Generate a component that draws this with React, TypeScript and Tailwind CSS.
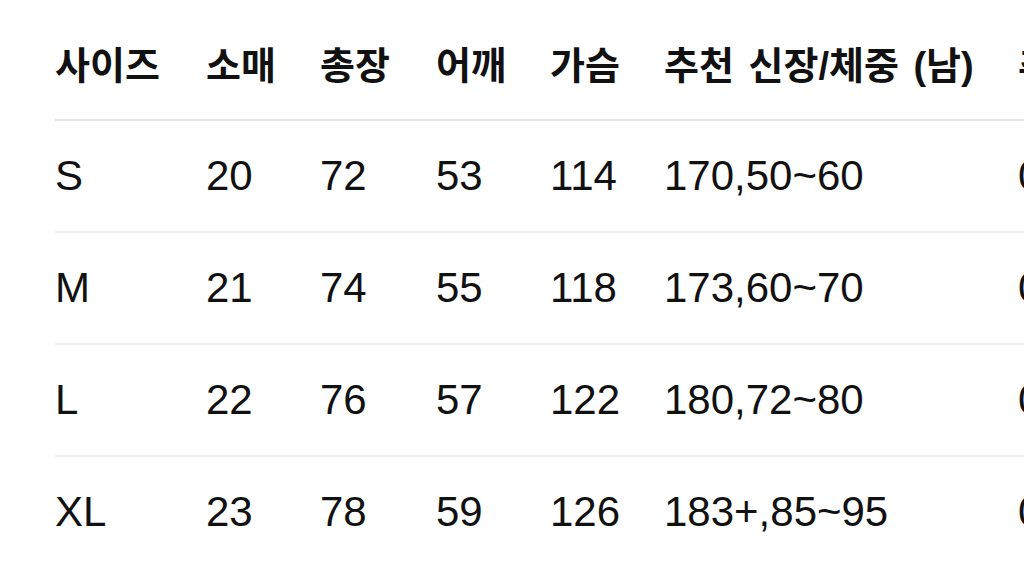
import React from "react";

const headers = ["사이즈", "소매", "총장", "어깨", "가슴", "추천 신장/체중 (남)", "추천 신장/체중 (여)"];
const rows = [
  ["S", "20", "72", "53", "114", "170,50~60", "0"],
  ["M", "21", "74", "55", "118", "173,60~70", "0"],
  ["L", "22", "76", "57", "122", "180,72~80", "0"],
  ["XL", "23", "78", "59", "126", "183+,85~95", "0"],
];

const cols = "grid grid-cols-[151px_114px_116px_114px_114px_354px_360px]";

export default function App() {
  return (
    <div
      className="w-[1024px] h-[563px] overflow-hidden bg-white pl-[55px] pt-[9px]"
      style={{ fontFamily: '"Liberation Sans", "Noto Sans CJK KR", sans-serif' }}
    >
      <div className="w-[1300px]">
        <div className={`${cols} h-[112px] items-center border-b-2 border-[#e4e4e4] text-[38px] font-bold text-[#111111] [word-spacing:4px]`}>
          {headers.map((h, i) => (
            <div key={i} className="whitespace-nowrap leading-none pt-[3px]">
              {h}
            </div>
          ))}
        </div>
        {rows.map((r, ri) => (
          <div key={ri} className={`${cols} h-[112px] items-center border-b-2 border-[#efefef] text-[42px] text-[#111111]`}>
            {r.map((c, i) => (
              <div key={i} className="whitespace-nowrap leading-none">
                {c}
              </div>
            ))}
          </div>
        ))}
      </div>
    </div>
  );
}
